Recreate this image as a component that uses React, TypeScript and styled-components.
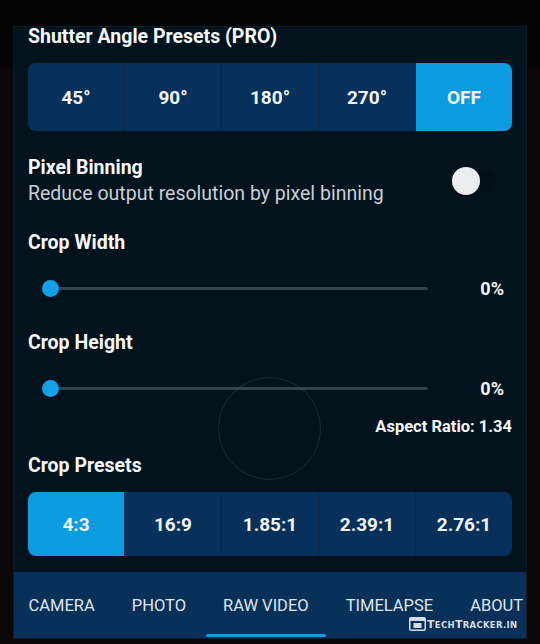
import React from "react";
import styled, { createGlobalStyle } from "styled-components";

const GlobalStyle = createGlobalStyle`
  html, body {
    margin: 0;
    padding: 0;
    background: #0b0709;
  }
  body {
    font-family: Roboto, "Liberation Sans", sans-serif;
    color: #f4f6f8;
  }
`;

const Page = styled.div`
  width: 540px;
  height: 644px;
  overflow: hidden;
  background: linear-gradient(#050505 0 68px, #0b0709 68px);
  padding-top: 27px;
  box-sizing: border-box;
`;

const Panel = styled.div`
  position: relative;
  margin-left: 14px;
  width: 512px;
  height: 611px;
  background: #03131e;
  box-shadow: 0 0 0 1px #0a1e2a;
  display: flex;
  flex-direction: column;
`;

const Content = styled.div`
  padding: 0 14px;
  display: flex;
  flex-direction: column;
`;

const Title = styled.div<{ $mt?: number }>`
  font-size: 19.5px;
  font-weight: 700;
  line-height: 24px;
  margin-top: ${(p) => p.$mt ?? 0}px;
  color: #f6f8fa;
`;

const Subtitle = styled.div`
  font-size: 19.5px;
  line-height: 24px;
  margin-top: 2px;
  color: #c9cfd5;
`;

const Segmented = styled.div<{ $h: number; $mt: number }>`
  display: grid;
  grid-template-columns: repeat(5, 1fr);
  height: ${(p) => p.$h}px;
  margin-top: ${(p) => p.$mt}px;
  border-radius: 8px;
  overflow: hidden;
  background: #0a2744;
  gap: 1px;
`;

const Segment = styled.div<{ $active?: boolean }>`
  display: flex;
  align-items: center;
  justify-content: center;
  font-size: 19px;
  font-weight: 700;
  color: #f2f5f8;
  background: ${(p) => (p.$active ? "#0b9ce0" : "#07305a")};
`;

const ToggleRow = styled.div`
  display: flex;
  align-items: center;
  justify-content: space-between;
  margin-top: 25px;
`;

const Track = styled.div`
  position: relative;
  width: 43px;
  height: 22px;
  border-radius: 11px;
  background: #02101a;
  margin-right: 17px;
`;

const Thumb = styled.div`
  position: absolute;
  left: 0;
  top: -3px;
  width: 28px;
  height: 28px;
  border-radius: 50%;
  background: #ecedef;
`;

const SliderRow = styled.div`
  display: flex;
  align-items: center;
  height: 36px;
  margin-top: 15px;
`;

const SliderTrack = styled.div`
  position: relative;
  margin-left: 22px;
  width: 378px;
  height: 3px;
  background: #33434d;
  border-radius: 2px;
`;

const SliderKnob = styled.div`
  position: absolute;
  left: -8px;
  top: -7px;
  width: 17px;
  height: 17px;
  border-radius: 50%;
  background: #12a0e6;
`;

const SliderValue = styled.div`
  margin-left: auto;
  margin-right: 8px;
  font-size: 18px;
  font-weight: 700;
`;

const Aspect = styled.div`
  align-self: flex-end;
  margin-top: 11px;
  font-size: 16.5px;
  font-weight: 700;
  line-height: 20px;
`;

const Ring = styled.div`
  position: absolute;
  left: 204px;
  top: 350px;
  width: 101px;
  height: 101px;
  border-radius: 50%;
  border: 1.5px solid rgba(120, 140, 155, 0.2);
  pointer-events: none;
`;

const Nav = styled.div`
  margin-top: auto;
  height: 66px;
  background: #083058;
  display: flex;
  align-items: center;
  overflow: hidden;
  position: relative;
`;

const Tab = styled.div<{ $active?: boolean }>`
  position: relative;
  flex: none;
  height: 100%;
  display: flex;
  align-items: center;
  padding: 0 18.5px;
  font-size: 16.5px;
  color: #dde5ee;
  white-space: nowrap;
  &:first-child {
    padding-left: 14.5px;
  }
  &::after {
    content: "";
    display: ${(p) => (p.$active ? "block" : "none")};
    position: absolute;
    left: 1.5px;
    right: 1.5px;
    bottom: 1px;
    height: 3px;
    border-radius: 2px;
    background: #1a9be0;
  }
`;

const Mark = styled.div`
  position: absolute;
  left: 395px;
  top: 590px;
  display: flex;
  align-items: center;
  gap: 1px;
  font-family: "DejaVu Sans", sans-serif;
  font-weight: 700;
  font-size: 8.5px;
  letter-spacing: 0.3px;
  color: #d7dde4;
  pointer-events: none;
`;

const Big = styled.span`
  font-size: 11px;
`;

const presetsShutter = ["45°", "90°", "180°", "270°", "OFF"];
const presetsCrop = ["4:3", "16:9", "1.85:1", "2.39:1", "2.76:1"];
const tabs = ["CAMERA", "PHOTO", "RAW VIDEO", "TIMELAPSE", "ABOUT"];

const Slider = () => (
  <SliderRow>
    <SliderTrack>
      <SliderKnob />
    </SliderTrack>
    <SliderValue>0%</SliderValue>
  </SliderRow>
);

export default function App() {
  return (
    <Page>
      <GlobalStyle />
      <Panel>
        <Content>
          <Title $mt={-2}>Shutter Angle Presets (PRO)</Title>
          <Segmented $h={68} $mt={14}>
            {presetsShutter.map((s) => (
              <Segment key={s} $active={s === "OFF"}>
                {s}
              </Segment>
            ))}
          </Segmented>
          <ToggleRow>
            <div>
              <Title>Pixel Binning</Title>
              <Subtitle>Reduce output resolution by pixel binning</Subtitle>
            </div>
            <Track>
              <Thumb />
            </Track>
          </ToggleRow>
          <Title $mt={25}>Crop Width</Title>
          <Slider />
          <Title $mt={25}>Crop Height</Title>
          <Slider />
          <Aspect>Aspect Ratio: 1.34</Aspect>
          <Title $mt={17}>Crop Presets</Title>
          <Segmented $h={64} $mt={14}>
            {presetsCrop.map((s) => (
              <Segment key={s} $active={s === "4:3"}>
                {s}
              </Segment>
            ))}
          </Segmented>
        </Content>
        <Nav>
          {tabs.map((t) => (
            <Tab key={t} $active={t === "RAW VIDEO"}>
              {t}
            </Tab>
          ))}
        </Nav>
        <Ring />
        <Mark>
          <svg width="17" height="14" viewBox="0 0 17 14">
            <rect x="0.75" y="0.75" width="15.5" height="12.5" rx="1.5" fill="none" stroke="#d7dde4" strokeWidth="1.5" />
            <rect x="0.75" y="0.75" width="15.5" height="3.2" fill="#d7dde4" />
            <rect x="4.5" y="6" width="8" height="5" fill="#d7dde4" />
          </svg>
          <span>
            <Big>T</Big>ECH<Big>T</Big>RACKER.IN
          </span>
        </Mark>
      </Panel>
    </Page>
  );
}
